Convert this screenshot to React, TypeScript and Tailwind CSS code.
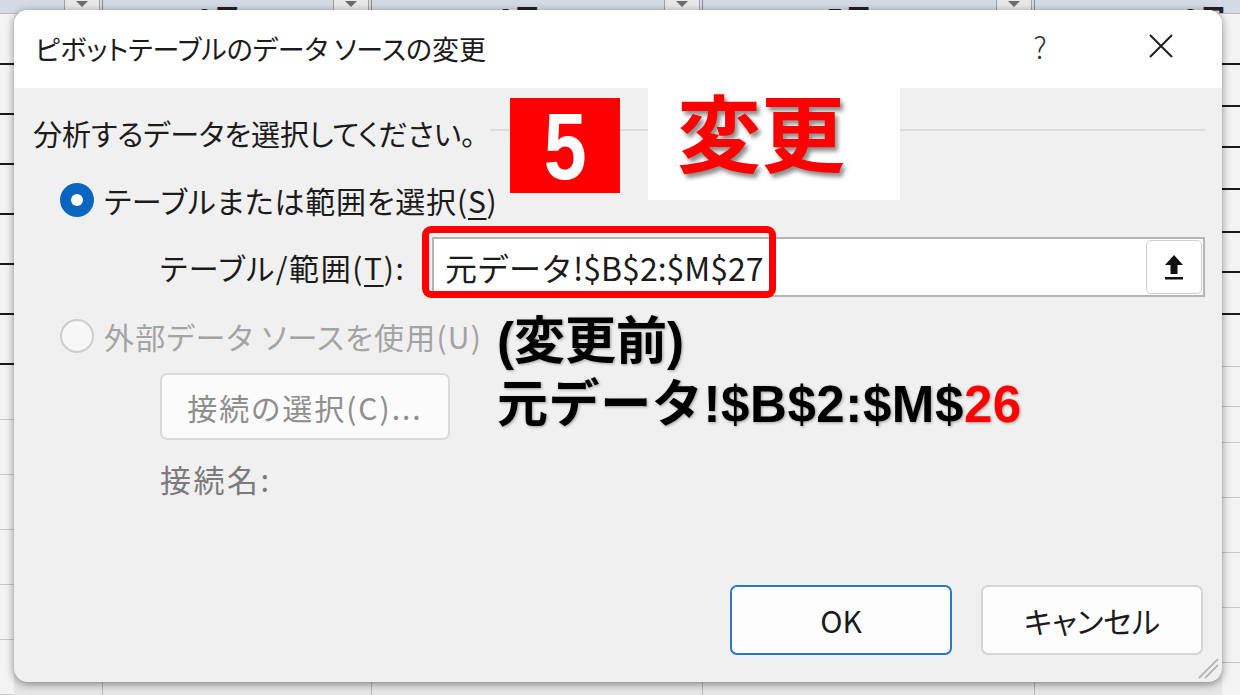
import React from "react";

const F = "font-['Noto_Sans_CJK_JP','Noto_Sans',sans-serif]";
const PALT = "[font-feature-settings:'palt']";

function LeftRows() {
  const rows = [51, 50, 50, 50, 50, 50, 50, 55, 55, 55, 55, 55, 55];
  return (
    <div className="flex flex-col w-[14px] bg-[#f3f3f3]">
      {rows.map((h, i) => (
        <div
          key={i}
          style={{ height: h }}
          className={i < 7 ? "border-b-2 border-[#1a1a1a] shrink-0" : "border-b border-[#c8c8c8] shrink-0"}
        />
      ))}
    </div>
  );
}

function RightRows() {
  const rows = [51, 42, 41, 42, 43, 40, 42, 52, 40, 36, 55, 55, 55, 55];
  return (
    <div className="flex flex-col w-[18px] bg-[#f3f3f3]">
      {rows.map((h, i) => (
        <div
          key={i}
          style={{ height: h }}
          className={i < 7 ? "border-b-2 border-[#1a1a1a] shrink-0" : "border-b border-[#c8c8c8] shrink-0"}
        />
      ))}
    </div>
  );
}

function HeaderCell({ w, label }: { w: number; label: string }) {
  return (
    <div style={{ width: w }} className="relative h-full shrink-0 border-r border-[#8a8a8a] flex">
      <div className="flex-1 flex items-end justify-center overflow-hidden">
        <span className="text-[30px] font-bold leading-none text-[#222] mb-[-20px]">{label}</span>
      </div>
      <div className="w-[36px] h-[13px] bg-[#e8e8e8] border-x border-[#a0a0a0] flex items-start justify-center mr-[2px]">
        <svg width="14" height="8" viewBox="0 0 14 8">
          <path d="M1 1 H13 L7 7 Z" fill="#6b6b6b" />
        </svg>
      </div>
    </div>
  );
}

function Background() {
  return (
    <div className="flex flex-col h-full">
      <div className="h-[14px] bg-[#d4dae3] flex border-b border-[#b8bec8] overflow-hidden">
        <HeaderCell w={103} label="" />
        <HeaderCell w={269} label="6月" />
        <HeaderCell w={331} label="4月" />
        <HeaderCell w={332} label="5月" />
        <div className="flex-1 flex items-end justify-end pr-[12px] overflow-hidden">
          <span className="text-[30px] font-bold leading-none text-[#222] mb-[-20px]">6月</span>
        </div>
      </div>
      <div className="flex flex-1 relative">
        <LeftRows />
        <div className="flex-1 bg-[#e6e6e6] flex">
          <div className="w-[89px] border-r border-[#b5b5b5]" />
          <div className="w-[269px] border-r border-[#b5b5b5]" />
          <div className="w-[331px] border-r border-[#b5b5b5]" />
          <div className="w-[332px] border-r border-[#b5b5b5]" />
          <div className="flex-1" />
        </div>
        <RightRows />
      </div>
    </div>
  );
}

export default function App() {
  return (
    <div className={`relative w-[1240px] h-[695px] overflow-hidden bg-[#e8e8e8] ${F}`}>
      <Background />

      {/* Dialog */}
      <div className="absolute left-[14px] top-[10px] w-[1208px] h-[672px] rounded-[14px] overflow-hidden bg-[#f0f0f0] shadow-[0_2px_8px_rgba(0,0,0,0.45)] flex flex-col">
        {/* Title bar */}
        <div className={`h-[78px] bg-white flex items-center pl-[21px] pr-[30px] ${PALT}`}>
          <div className="flex-1 text-[27px] leading-none text-[#1b1b1b] pb-[2px]">ピボットテーブルのデータ ソースの変更</div>
          <div className="w-[60px] text-center text-[30px] leading-none text-[#333] font-light pb-[6px] mr-[8px]">?</div>
          <div className="w-[62px] ml-[52px] flex items-center justify-center pb-[6px]">
            <svg width="26" height="26" viewBox="0 0 26 26">
              <path d="M2 2 L24 24 M24 2 L2 24" stroke="#1f1f1f" strokeWidth="2" />
            </svg>
          </div>
        </div>

        {/* Body */}
        <div className={`flex-1 flex flex-col ${PALT}`}>
          <div className="pl-[19px] pr-[17px] pt-[27px] flex items-center h-[63px]">
            <span className="text-[29px] leading-[36px] text-[#1b1b1b]">分析するデータを選択してください。</span>
            <div className="flex-1 h-[2px] bg-[#dcdcdc] ml-[14px] mt-[-6px]" />
          </div>

          <div className="mt-[29px] pl-[46px] flex items-center h-[40px] gap-[10px]">
            <div className="w-[34px] h-[34px] rounded-full bg-[#0a64c0] flex items-center justify-center">
              <div className="w-[12px] h-[12px] rounded-full bg-white" />
            </div>
            <span className="text-[30px] tracking-[0.8px] leading-none text-[#1b1b1b]">
              テーブルまたは範囲を選択(<span className="underline underline-offset-[5px] decoration-[2px]">S</span>)
            </span>
          </div>

          <div className="mt-[17px] flex items-center h-[60px]">
            <div className="w-[418px] pl-[146px] text-[30px] tracking-[1.6px] leading-none text-[#1b1b1b]">
              テーブル/範囲(<span className="underline underline-offset-[5px] decoration-[2px]">T</span>):
            </div>
            <div className="flex-1 mr-[17px] h-[60px] bg-white border-2 border-[#b4b4b4] flex items-center">
              <span className="flex-1 pl-[11px] text-[32px] leading-none text-[#1b1b1b] [font-feature-settings:normal]">
                元データ!$B$2:$M$27
              </span>
              <div className="w-[56px] h-[54px] mr-[1px] bg-white border border-[#cfcfcf] rounded-[5px] flex items-center justify-center">
                <svg width="26" height="30" viewBox="0 0 26 30">
                  <path d="M13 3 L4 13 H9.5 V22 H16.5 V13 H22 Z" fill="#111" />
                  <rect x="4" y="25" width="18" height="2.5" fill="#111" />
                </svg>
              </div>
            </div>
          </div>

          <div className="mt-[19px] pl-[46px] flex items-center h-[40px] gap-[10px]">
            <div className="w-[34px] h-[34px] rounded-full border-2 border-[#cdcdcd] bg-[#f7f7f7]" />
            <span className="text-[30px] tracking-[1.2px] leading-none text-[#a3a3a3]">外部データ ソースを使用(U)</span>
          </div>

          <div className="mt-[17px] pl-[146px]">
            <div className="w-[290px] h-[67px] bg-[#fbfbfb] border-2 border-[#dadada] rounded-[7px] flex items-center justify-center text-[30px] tracking-[2px] leading-none text-[#8e8e8e]">
              接続の選択(C)...
            </div>
          </div>

          <div className="mt-[20px] pl-[146px] h-[36px] flex items-center text-[31px] tracking-[2.5px] leading-none text-[#7b7b7b]">接続名:</div>

          <div className="mt-auto pb-[27px] pr-[19px] flex justify-end gap-[29px]">
            <div className="w-[222px] h-[70px] bg-[#fdfdfd] border-2 border-[#2d77c4] rounded-[7px] flex items-center justify-center text-[30px] leading-none text-[#1b1b1b]">
              OK
            </div>
            <div className="w-[222px] h-[70px] bg-[#fdfdfd] border-2 border-[#d4d4d4] rounded-[7px] flex items-center justify-center text-[30px] leading-none text-[#1b1b1b]">
              キャンセル
            </div>
          </div>
        </div>

        {/* resize grip */}
        <div className="absolute right-[3px] bottom-[3px]">
          <svg width="26" height="26" viewBox="0 0 26 26">
            <path d="M25 6 L6 25 M25 12 L12 25" stroke="#b8b8b8" strokeWidth="2" />
          </svg>
        </div>
      </div>

      {/* Annotations */}
      <div className="absolute left-[510px] top-[98px] w-[110px] h-[95px] bg-[#ff0000] flex items-center justify-center">
        <span className="text-white font-bold text-[94px] leading-none font-['Liberation_Sans',sans-serif] scale-x-[0.82] translate-y-[1px]">5</span>
      </div>
      <div className="absolute left-[648px] top-[88px] w-[252px] h-[112px] bg-white flex items-start pl-[29px]">
        <span className="text-[#ff0000] font-bold text-[84px] leading-none mt-[0px] [text-shadow:3px_4px_4px_rgba(0,0,0,0.45)]">変更</span>
      </div>
      <div className="absolute left-[422px] top-[226px] w-[354px] h-[72px] border-[7px] border-[#ff0000] rounded-[9px]" />

      <div className="absolute left-[497px] top-[310px] font-['Liberation_Sans','Noto_Sans_CJK_JP',sans-serif] font-bold text-[51px] leading-[63px] text-black [text-shadow:1px_1px_3px_rgba(0,0,0,0.35)]">
        <div>(変更前)</div>
        <div className="tracking-[0.6px]">
          元データ!$B$2:$M$<span className="text-[#ff0000]">26</span>
        </div>
      </div>
    </div>
  );
}
